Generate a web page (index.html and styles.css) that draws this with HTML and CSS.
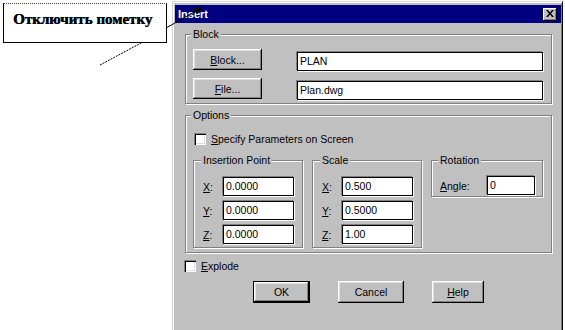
FILE: index.html
```html
<!DOCTYPE html>
<html lang="ru">
<head>
    <meta charset="UTF-8">
    <title>Insert</title>
    <link rel="stylesheet" href="styles.css">
</head>
<body>
    <div class="note">Отключить пометку</div>
    <svg class="leaders" width="565" height="330" viewBox="0 0 565 330">
        <line x1="166" y1="28" x2="198" y2="10" stroke="#000" stroke-width="1"/>
        <polygon points="204,7 197,14.5 193.5,8.3" fill="#000"/>
        <line x1="100" y1="65" x2="143" y2="42" stroke="#000" stroke-width="1" stroke-dasharray="2 1"/>
    </svg>

    <div class="dialog">
        <div class="titlebar">
            <span>Insert</span>
            <div class="close">
                <svg width="8" height="7" viewBox="0 0 8 7"><path d="M0 0h2l2 2.5L6 0h2L5 3.5 8 7H6L4 4.5 2 7H0l3-3.5z" fill="#000"/></svg>
            </div>
        </div>

        <div class="content">
            <fieldset class="group block">
                <legend>Block</legend>
                <div class="block-rows">
                    <div class="btn"><u>B</u>lock...</div>
                    <div class="field">PLAN</div>
                    <div class="btn"><u>F</u>ile...</div>
                    <div class="field">Plan.dwg</div>
                </div>
            </fieldset>

            <fieldset class="group options">
                <legend>Options</legend>
                <div class="check"><span class="box"></span><span><u>S</u>pecify Parameters on Screen</span></div>

                <div class="subgroups">
                    <fieldset class="group sub coords">
                        <legend>Insertion Point</legend>
                        <div class="rows">
                            <div class="row"><span class="lbl"><u>X</u>:</span><div class="field">0.0000</div></div>
                            <div class="row"><span class="lbl"><u>Y</u>:</span><div class="field">0.0000</div></div>
                            <div class="row"><span class="lbl"><u>Z</u>:</span><div class="field">0.0000</div></div>
                        </div>
                    </fieldset>
                    <fieldset class="group sub coords">
                        <legend>Scale</legend>
                        <div class="rows">
                            <div class="row"><span class="lbl"><u>X</u>:</span><div class="field">0.500</div></div>
                            <div class="row"><span class="lbl"><u>Y</u>:</span><div class="field">0.5000</div></div>
                            <div class="row"><span class="lbl"><u>Z</u>:</span><div class="field">1.00</div></div>
                        </div>
                    </fieldset>
                    <fieldset class="group sub rotation">
                        <legend>Rotation</legend>
                        <div class="row"><span class="lbl"><u>A</u>ngle:</span><div class="field">0</div></div>
                    </fieldset>
                </div>
            </fieldset>

            <div class="check explode"><span class="box"></span><span><u>E</u>xplode</span></div>

            <div class="actions">
                <div class="btn default ok">OK</div>
                <div class="btn cancel">Cancel</div>
                <div class="btn help"><u>H</u>elp</div>
            </div>
        </div>
    </div>
</body>
</html>
```

FILE: styles.css
```css
* {
    box-sizing: border-box;
}
body {
    margin: 0;
    width: 565px;
    height: 330px;
    overflow: hidden;
    position: relative;
    background-color: #fff;
    font-family: "Liberation Sans", Arial, sans-serif;
    font-size: 10.5px;
    color: #000;
}
u {
    text-decoration: underline;
    text-underline-offset: 1px;
}

/* callout */
.note {
    position: absolute;
    left: 3px;
    top: 3px;
    width: 164px;
    height: 40px;
    border: 1px solid #000;
    border-top: 1px dotted #444;
    padding: 7px 0 0 9px;
    font-family: "Liberation Serif", "Times New Roman", serif;
    font-weight: bold;
    font-size: 15px;
    text-shadow: 0.5px 0 0 #000;
}
.leaders {
    position: absolute;
    left: 0;
    top: 0;
    z-index: 5;
    pointer-events: none;
}

/* window */
.dialog {
    margin: 1px 0 0 172px;
    width: 391px;
    height: 329px;
    background-color: #c0c0c0;
    border-left: 1px solid #d4d4d4;
    border-top: 1px solid #dfdfdf;
    border-right: 1px solid #000;
    box-shadow: inset 1px 1px 0 #fff, inset -1px 0 0 #808080;
    padding: 3px 1px 0 2px;
}
.titlebar {
    height: 18px;
    background-color: #000080;
    color: #fff;
    font-weight: bold;
    font-size: 11px;
    display: flex;
    align-items: center;
    justify-content: space-between;
    padding: 0 4px 0 3px;
}
.close {
    width: 14px;
    height: 13px;
    background-color: #c0c0c0;
    box-shadow: inset -1px -1px 0 #000, inset 1px 1px 0 #fff, inset -2px -2px 0 #808080;
    display: flex;
    align-items: center;
    justify-content: center;
    padding-bottom: 1px;
}
.content {
    padding: 5px 9px 0 10px;
}

/* group boxes */
.group {
    margin: 0;
    min-width: 0;
    border: 1px solid #808080;
    box-shadow: inset 1px 1px 0 #fff, 1px 1px 0 #fff;
}
.group legend {
    margin-left: -2px;
    padding: 0 2px;
    line-height: 13px;
    font-weight: normal;
    background-color: #c0c0c0;
}
.block {
    padding: 8px 8px 3px 7px;
}
.block-rows {
    display: grid;
    grid-template-columns: 69px 246px;
    column-gap: 35px;
    row-gap: 7px;
}
.block-rows .field {
    margin-top: 3px;
}
.options {
    margin-top: 5px;
    padding: 11px 8px 4px 7px;
}
.subgroups {
    display: flex;
    align-items: flex-start;
    gap: 9px;
    margin-top: 9px;
}
.coords {
    width: 110px;
    padding: 10px 8px 3px 9px;
}
.rotation {
    width: 112px;
    padding: 9px 7px 1px 8px;
}
.rows {
    display: flex;
    flex-direction: column;
    gap: 5px;
}
.row {
    display: flex;
    align-items: center;
}
.coords .lbl {
    width: 20px;
}
.coords .field {
    width: 71px;
}
.rotation .lbl {
    width: 47px;
}
.rotation .field {
    width: 48px;
}

/* controls */
.btn {
    height: 21px;
    display: flex;
    align-items: center;
    justify-content: center;
    background-color: #c0c0c0;
    box-shadow: inset -1px -1px 0 #000, inset 1px 1px 0 #fff, inset -2px -2px 0 #808080, inset 2px 2px 0 #dfdfdf;
}
.field {
    height: 19px;
    background-color: #fff;
    border: 1px solid #000;
    box-shadow: -1px -1px 0 #808080, 1px 1px 0 #fff;
    padding: 0 2px;
    line-height: 17px;
}
.check {
    display: flex;
    align-items: center;
    gap: 5px;
    height: 12px;
}
.check .box {
    width: 12px;
    height: 12px;
    background-color: #fff;
    box-shadow: inset 1px 1px 0 #808080, inset 2px 2px 0 #000, inset -1px -1px 0 #fff, inset -2px -2px 0 #dfdfdf;
}
.options .check {
    margin-left: 1px;
}
.explode {
    margin-top: 7px;
    margin-left: -1px;
}
.actions {
    display: flex;
    gap: 28px;
    margin-top: 9px;
    padding-left: 68px;
}
.actions .btn {
    height: 22px;
}
.default {
    border: 1px solid #000;
}
.ok {
    width: 57px;
}
.cancel {
    width: 66px;
}
.help {
    width: 52px;
}
```
